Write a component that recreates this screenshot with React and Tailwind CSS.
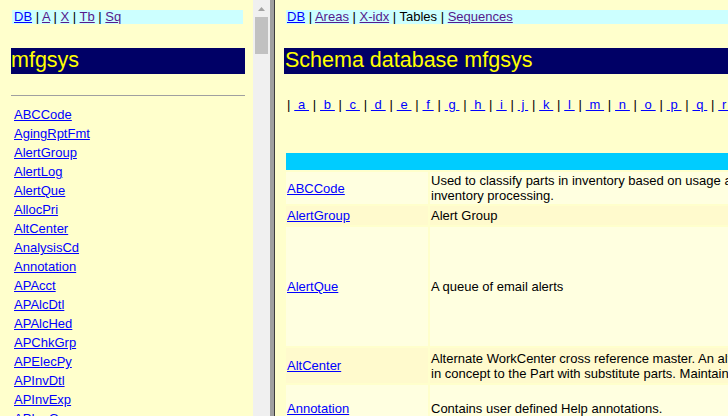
import React from 'react';

const tableNames = [
  'ABCCode', 'AgingRptFmt', 'AlertGroup', 'AlertLog', 'AlertQue', 'AllocPri',
  'AltCenter', 'AnalysisCd', 'Annotation', 'APAcct', 'APAlcDtl', 'APAlcHed',
  'APChkGrp', 'APElecPy', 'APInvDtl', 'APInvExp', 'APInvGrp', 'APInvHed',
];

const letters = 'abcdefghijklmnopqrstuvwxyz'.split('');

const rows = [
  {
    name: 'ABCCode',
    h: 'h-[32px]',
    lines: [
      'Used to classify parts in inventory based on usage and cost, used by cycle count and',
      'inventory processing.',
    ],
  },
  { name: 'AlertGroup', h: 'h-[19px]', lines: ['Alert Group'] },
  { name: 'AlertQue', h: 'h-[119px]', lines: ['A queue of email alerts'] },
  {
    name: 'AltCenter',
    h: 'h-[35px]',
    lines: [
      'Alternate WorkCenter cross reference master. An alternate work center is similar',
      'in concept to the Part with substitute parts. Maintained in the resource group.',
    ],
  },
  { name: 'Annotation', h: 'h-[46px]', lines: ['Contains user defined Help annotations.'] },
];

const Link = ({ children, visited }) => (
  <a href="#" className={`underline ${visited ? 'text-[#551a8b]' : 'text-[#0000ff]'}`}>
    {children}
  </a>
);

const LeftFrame = () => (
  <div className="w-[253px] shrink-0 overflow-hidden pl-[11px]">
    <div className="mt-[10px] ml-px h-[14px] w-[231px] whitespace-nowrap bg-[#ccffff] pl-[2px] leading-[14px]">
      <Link>DB</Link> | <Link visited>A</Link> | <Link visited>X</Link> | <Link visited>Tb</Link> | <Link visited>Sq</Link>
    </div>
    <h1 className="mt-[24px] h-[26px] w-[234px] bg-[#000066] text-[21.5px] font-normal leading-[24px] text-[#ffff00]">
      mfgsys
    </h1>
    <div className="mt-[21px] w-[234px] border-t border-[#a0a0a0]" />
    <div className="mt-[9px] pl-[3px]">
      {tableNames.map((t) => (
        <div key={t} className="leading-[19px] whitespace-nowrap">
          <Link>{t}</Link>
        </div>
      ))}
    </div>
  </div>
);

const Scrollbar = () => (
  <div className="flex w-[17px] shrink-0 flex-col bg-[#f0f0f0]">
    <div className="flex h-[17px] items-center justify-center">
      <svg width="7" height="4" viewBox="0 0 7 4">
        <path d="M3.5 0L7 4H0z" fill="#a3a3a3" />
      </svg>
    </div>
    <div className="mx-[2px] h-[37px] bg-[#c1c1c1]" />
  </div>
);

const RightFrame = () => (
  <div className="min-w-0 flex-1 overflow-hidden">
    <div className="w-[900px]">
      <div className="mt-[10px] ml-[11px] h-[14px] whitespace-nowrap bg-[#ccffff] pl-px leading-[14px]">
        <Link>DB</Link> | <Link visited>Areas</Link> | <Link visited>X-idx</Link> | Tables | <Link visited>Sequences</Link>
      </div>
      <h1 className="mt-[24px] ml-[9px] h-[26px] bg-[#000066] pl-px text-[21.5px] font-normal leading-[24px] text-[#ffff00]">
        Schema database mfgsys
      </h1>
      <div className="mt-[23px] ml-[12px] h-[15px] whitespace-nowrap leading-[15px] tracking-[0.12px]">
        {'| '}
        {letters.map((l, i) => (
          <React.Fragment key={l}>
            {i > 0 && ' | '}
            <Link>{'\u00a0' + l + '\u00a0'}</Link>
          </React.Fragment>
        ))}
      </div>
      <div className="mt-[41px] ml-[11px] flex flex-col gap-y-[2px]">
        <div className="h-[17px] bg-[#00ccff]" />
        {rows.map((r, i) => {
          const bg = i % 2 === 0 ? 'bg-[#ffffe0]' : 'bg-[#fffacd]';
          return (
            <div key={r.name} className={`flex gap-x-[2px] ${r.h}`}>
              <div className={`flex w-[142px] items-center px-px leading-[15px] ${bg}`}>
                <Link>{r.name}</Link>
              </div>
              <div className={`flex flex-1 flex-col justify-center px-px leading-[15px] whitespace-nowrap ${bg}`}>
                {r.lines.map((line) => (
                  <div key={line}>{line}</div>
                ))}
              </div>
            </div>
          );
        })}
      </div>
    </div>
  </div>
);

export default function App() {
  return (
    <div className="flex h-[416px] w-[728px] overflow-hidden bg-[#ffffcc] font-['Liberation_Sans',Arial,sans-serif] text-[13px] text-black">
      <LeftFrame />
      <Scrollbar />
      <div className="w-[4px] shrink-0 bg-[#a0a0a0]" />
      <div className="w-px shrink-0 bg-[#3c3c3c]" />
      <RightFrame />
    </div>
  );
}
